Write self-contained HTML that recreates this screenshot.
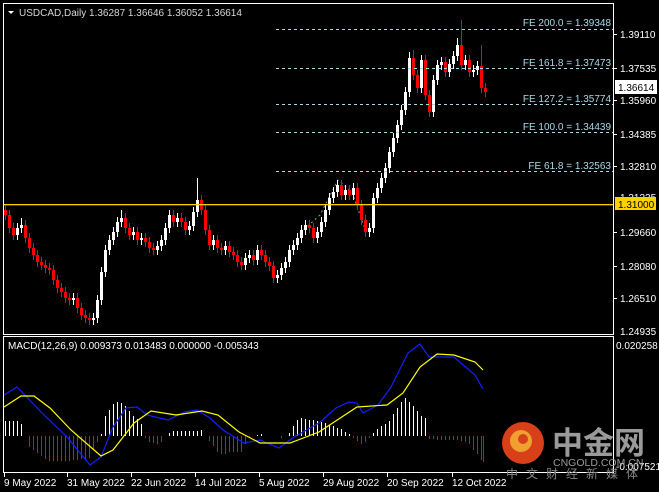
<!DOCTYPE html>
<html><head><meta charset="utf-8"><style>
html,body{margin:0;padding:0;background:#000;width:659px;height:492px;overflow:hidden}
svg{display:block}
text{font-family:"Liberation Sans","Noto Sans CJK SC",sans-serif}
</style></head><body>
<svg width="659" height="492" viewBox="0 0 659 492" xmlns="http://www.w3.org/2000/svg">
<rect width="659" height="492" fill="#000"/>
<!-- zigzag -->
<polyline points="300,233 320,215 338,180 352,192 366,232" fill="none" stroke="#999" stroke-dasharray="2,3"/>
<!-- red candles -->
<path stroke="#ff0000" stroke-width="1" fill="none" d="M5.5 205V220M9.5 210V233M13.5 223V240M25.5 220V243M29.5 233V253M33.5 243V260M37.5 250V267M41.5 257V270M45.5 260V273M49.5 263V275M53.5 265V285M57.5 275V293M61.5 283V297M65.5 287V303M69.5 293V305M77.5 293V313M81.5 303V320M85.5 310V323M89.5 313V325M125.5 213V233M129.5 223V240M137.5 227V245M145.5 233V247M149.5 237V253M153.5 243V255M173.5 210V227M181.5 213V227M185.5 217V235M201.5 195V215M205.5 205V235M209.5 225V250M217.5 235V253M221.5 243V255M229.5 241V257M233.5 247V260M237.5 250V267M241.5 257V270M253.5 250V265M261.5 245V260M265.5 250V267M269.5 257V271M273.5 261V283M309.5 220V233M313.5 223V243M341.5 180V200M349.5 185V200M357.5 183V210M361.5 200V225M365.5 215V237M413.5 50V80M417.5 70V93M425.5 55V100M429.5 90V117M445.5 57V77M461.5 20V70M469.5 55V77M481.5 45V93M485.5 83V97"/>
<path stroke="#ff0000" stroke-width="3" fill="none" d="M5.5 210V215M9.5 215V228M13.5 228V235M25.5 225V238M29.5 238V248M33.5 248V255M37.5 255V262M41.5 262V265M45.5 265V268M49.5 268V270M53.5 270V280M57.5 280V288M61.5 288V292M65.5 292V298M69.5 298V300M77.5 298V308M81.5 308V315M85.5 315V318M89.5 318V320M125.5 218V228M129.5 228V235M137.5 232V240M145.5 238V242M149.5 242V248M153.5 248V250M173.5 215V222M181.5 218V222M185.5 222V230M201.5 200V210M205.5 210V230M209.5 230V245M217.5 240V248M221.5 248V250M229.5 246V252M233.5 252V255M237.5 255V262M241.5 262V265M253.5 255V260M261.5 250V255M265.5 255V262M269.5 262V266M273.5 266V278M309.5 225V228M313.5 228V238M341.5 185V195M349.5 190V195M357.5 188V205M361.5 205V220M365.5 220V232M413.5 58V75M417.5 75V88M425.5 60V95M429.5 95V112M445.5 62V72M461.5 45V65M469.5 60V72M481.5 66V88M485.5 88V92"/>
<!-- white candles -->
<path stroke="#ffffff" stroke-width="1" fill="none" d="M17.5 223V240M21.5 218V233M73.5 293V305M93.5 313V325M97.5 295V323M101.5 267V305M105.5 245V277M109.5 235V255M113.5 227V245M117.5 217V237M121.5 210V227M133.5 227V240M141.5 233V245M157.5 241V255M161.5 235V251M165.5 223V245M169.5 210V233M177.5 213V227M189.5 221V235M193.5 207V231M197.5 178V217M213.5 235V250M225.5 241V255M245.5 253V270M249.5 250V263M257.5 245V265M277.5 270V283M281.5 263V280M285.5 257V273M289.5 245V267M293.5 240V255M297.5 233V250M301.5 225V243M305.5 220V235M317.5 227V243M321.5 217V237M325.5 205V227M329.5 193V215M333.5 187V203M337.5 180V197M345.5 185V200M353.5 183V200M369.5 223V237M373.5 193V233M377.5 183V203M381.5 173V193M385.5 163V183M389.5 147V173M393.5 133V157M397.5 120V143M401.5 105V130M405.5 87V115M409.5 52V97M421.5 55V93M433.5 75V117M437.5 60V85M441.5 57V70M449.5 59V77M453.5 51V69M457.5 38V61M465.5 55V70M473.5 65V77M477.5 61V75"/>
<path stroke="#ffffff" stroke-width="3" fill="none" d="M17.5 228V235M21.5 225V228M73.5 298V300M93.5 318V320M97.5 300V318M101.5 272V300M105.5 250V272M109.5 240V250M113.5 232V240M117.5 222V232M121.5 218V222M133.5 232V235M141.5 238V240M157.5 246V250M161.5 240V246M165.5 228V240M169.5 215V228M177.5 218V222M189.5 226V230M193.5 212V226M197.5 200V212M213.5 240V245M225.5 246V250M245.5 258V265M249.5 255V258M257.5 250V260M277.5 275V278M281.5 268V275M285.5 262V268M289.5 250V262M293.5 245V250M297.5 238V245M301.5 230V238M305.5 225V230M317.5 232V238M321.5 222V232M325.5 210V222M329.5 198V210M333.5 192V198M337.5 185V192M345.5 190V195M353.5 188V195M369.5 228V232M373.5 198V228M377.5 188V198M381.5 178V188M385.5 168V178M389.5 152V168M393.5 138V152M397.5 125V138M401.5 110V125M405.5 92V110M409.5 58V92M421.5 60V88M433.5 80V112M437.5 65V80M441.5 62V65M449.5 64V72M453.5 56V64M457.5 45V56M465.5 60V65M473.5 70V72M477.5 66V70"/>
<rect x="3.5" y="3.5" width="610" height="331" fill="none" stroke="#fff"/>
<rect x="3.5" y="336.5" width="610" height="136" fill="none" stroke="#fff"/>
<g stroke="#a8d8e8" stroke-dasharray="3,3" stroke-width="1">
<line x1="276" y1="29.5" x2="613" y2="29.5"/>
<line x1="276" y1="68.5" x2="613" y2="68.5"/>
<line x1="276" y1="104.5" x2="613" y2="104.5"/>
<line x1="276" y1="132.5" x2="613" y2="132.5"/>
<line x1="276" y1="171.5" x2="613" y2="171.5"/>
</g>
<g fill="#a8d8e8" font-size="10" text-anchor="end">
<text x="611" y="26">FE 200.0 = 1.39348</text>
<text x="611" y="66">FE 161.8 = 1.37473</text>
<text x="611" y="102">FE 127.2 = 1.35774</text>
<text x="611" y="130">FE 100.0 = 1.34439</text>
<text x="611" y="169">FE 61.8 = 1.32563</text>
</g>
<rect x="4" y="204" width="609" height="1.3" fill="#ffd000"/>
<polygon points="8,11 14,11 11,14" fill="#fff"/>
<text x="19" y="16" font-size="10" fill="#d8d8d8">USDCAD,Daily  1.36287 1.36646 1.36052 1.36614</text>
<g fill="#fff" font-size="10">
<text x="620" y="38">1.39110</text>
<text x="620" y="72">1.37535</text>
<text x="620" y="104">1.35960</text>
<text x="620" y="138">1.34385</text>
<text x="620" y="170">1.32810</text>
<text x="620" y="201">1.31235</text>
<text x="620" y="236">1.29660</text>
<text x="620" y="270">1.28080</text>
<text x="620" y="302">1.26510</text>
<text x="620" y="335">1.24935</text>
<text x="616" y="349">0.020258</text>
<text x="616" y="470">-0.007521</text>
</g>
<rect x="615" y="80" width="42" height="14" fill="#fff"/>
<text x="618" y="91" font-size="10" fill="#000">1.36614</text>
<rect x="615" y="197" width="41" height="13" fill="#ffd000"/>
<text x="618" y="208" font-size="10" fill="#000">1.31000</text>
<g fill="#fff"><rect x="613" y="34" width="4" height="1"/><rect x="613" y="68" width="4" height="1"/><rect x="613" y="100" width="4" height="1"/><rect x="613" y="134" width="4" height="1"/><rect x="613" y="166" width="4" height="1"/><rect x="613" y="232" width="4" height="1"/><rect x="613" y="266" width="4" height="1"/><rect x="613" y="298" width="4" height="1"/></g>
<text x="8" y="349" font-size="10" fill="#fff">MACD(12,26,9) 0.009373 0.013483 0.000000 -0.005343</text>
<!-- MACD histogram -->
<path stroke="#ffffff" stroke-width="1" fill="none" d="M5.5 436V421M9.5 436V421M13.5 436V421M17.5 436V421M21.5 436V424M101.5 436V434M105.5 436V416M109.5 436V410M113.5 436V404M117.5 436V402M121.5 436V403M125.5 436V406M129.5 436V411M133.5 436V416M137.5 436V419M141.5 436V424M169.5 436V433M173.5 436V431M177.5 436V431M181.5 436V431M185.5 436V431M189.5 436V431M193.5 436V431M197.5 436V431M201.5 436V430M257.5 436V435M261.5 436V434M289.5 436V433M293.5 436V426M297.5 436V420M301.5 436V418M305.5 436V419M309.5 436V420M313.5 436V420M317.5 436V421M321.5 436V422M325.5 436V423M329.5 436V425M333.5 436V426M337.5 436V428M341.5 436V429M345.5 436V432M349.5 436V434M373.5 436V433M377.5 436V429M381.5 436V426M385.5 436V424M389.5 436V421M393.5 436V414M397.5 436V408M401.5 436V402M405.5 436V398M409.5 436V402M413.5 436V406M417.5 436V411M421.5 436V416M425.5 436V418"/>
<path stroke="#ff0000" stroke-width="1" fill="none" d="M29.5 436V447M33.5 436V450M37.5 436V453M41.5 436V456M45.5 436V459M49.5 436V461M53.5 436V461M57.5 436V461M61.5 436V461M65.5 436V461M69.5 436V461M73.5 436V460M77.5 436V460M81.5 436V459M85.5 436V459M89.5 436V458M93.5 436V450M97.5 436V442M145.5 436V438M149.5 436V442M153.5 436V443M157.5 436V444M161.5 436V442M209.5 436V441M213.5 436V446M217.5 436V452M221.5 436V454M225.5 436V454M229.5 436V452M233.5 436V452M237.5 436V452M241.5 436V452M245.5 436V444M249.5 436V438M281.5 436V438M353.5 436V438M357.5 436V441M361.5 436V444M365.5 436V442M369.5 436V438M429.5 436V439M433.5 436V439M437.5 436V440M441.5 436V440M445.5 436V440M449.5 436V440M453.5 436V440M457.5 436V440M461.5 436V441M465.5 436V442M469.5 436V444M473.5 436V450M477.5 436V454M481.5 436V460M483.5 436V462"/>
<polyline fill="none" stroke="#1020ff" stroke-width="1.2" points="4,395 17,387 42,413 67,437 90,465 101,457 113,427 126,408 137,407 147,415 168,420 185,412 197,410 210,418 223,430 244,443 260,440 279,448 294,437 319,423 336,408 349,402 357,403 363,413 378,405 391,387 408,353 420,344 429,357 454,357 475,375 483,389"/>
<polyline fill="none" stroke="#ffff00" stroke-width="1.2" points="4,407 21,396 34,396 50,408 71,430 101,456 113,450 134,423 151,411 176,415 202,411 218,415 239,432 260,443 290,443 319,432 357,407 387,405 403,393 420,367 437,354 454,355 475,362 483,370"/>
<g fill="#fff" font-size="10">
<text x="4" y="486">9 May 2022</text>
<text x="67" y="486">31 May 2022</text>
<text x="131" y="486">22 Jun 2022</text>
<text x="195" y="486">14 Jul 2022</text>
<text x="259" y="486">5 Aug 2022</text>
<text x="323" y="486">29 Aug 2022</text>
<text x="387" y="486">20 Sep 2022</text>
<text x="452" y="486">12 Oct 2022</text>
</g>
<g fill="#fff"><rect x="4" y="473" width="1" height="4"/><rect x="67" y="473" width="1" height="4"/><rect x="131" y="473" width="1" height="4"/><rect x="195" y="473" width="1" height="4"/><rect x="259" y="473" width="1" height="4"/><rect x="323" y="473" width="1" height="4"/><rect x="387" y="473" width="1" height="4"/><rect x="452" y="473" width="1" height="4"/></g>
<circle cx="523" cy="443" r="21" fill="#d8401a"/>
<circle cx="521" cy="441" r="11" fill="#f0a030"/>
<circle cx="523" cy="439" r="5" fill="#d8401a"/>
<text x="552" y="454" font-size="31" font-weight="bold" fill="#9a9a9a" font-family="'Noto Sans CJK SC',sans-serif">中金网</text>
<text x="553" y="466" font-size="10.5" fill="#9a9a9a">CNGOLD.COM.CN</text>
<text x="506" y="478" font-size="12" fill="#888" letter-spacing="8" font-family="'Noto Sans CJK SC',sans-serif">中文财经新媒体</text>
</svg>
</body></html>
